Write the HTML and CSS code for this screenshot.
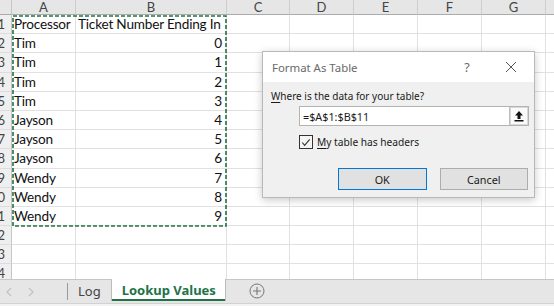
FILE: index.html
```html
<!DOCTYPE html>
<html>
<head>
<meta charset="utf-8">
<link rel="stylesheet" href="styles.css">
</head>
<body>
<div class="app">
  <div class="sheet">
    <div class="grid">
      <div class="corner"></div>
      <div class="ch">A</div><div class="ch">B</div><div class="ch">C</div><div class="ch">D</div><div class="ch">E</div><div class="ch">F</div><div class="ch">G</div><div class="ch"></div>

      <div class="rh">1</div><div class="c">Processor</div><div class="c">Ticket Number Ending In</div><div class="c"></div><div class="c"></div><div class="c"></div><div class="c"></div><div class="c"></div><div class="c"></div>
      <div class="rh">2</div><div class="c">Tim</div><div class="c num">0</div><div class="c"></div><div class="c"></div><div class="c"></div><div class="c"></div><div class="c"></div><div class="c"></div>
      <div class="rh">3</div><div class="c">Tim</div><div class="c num">1</div><div class="c"></div><div class="c"></div><div class="c"></div><div class="c"></div><div class="c"></div><div class="c"></div>
      <div class="rh">4</div><div class="c">Tim</div><div class="c num">2</div><div class="c"></div><div class="c"></div><div class="c"></div><div class="c"></div><div class="c"></div><div class="c"></div>
      <div class="rh">5</div><div class="c">Tim</div><div class="c num">3</div><div class="c"></div><div class="c"></div><div class="c"></div><div class="c"></div><div class="c"></div><div class="c"></div>
      <div class="rh">6</div><div class="c">Jayson</div><div class="c num">4</div><div class="c"></div><div class="c"></div><div class="c"></div><div class="c"></div><div class="c"></div><div class="c"></div>
      <div class="rh">7</div><div class="c">Jayson</div><div class="c num">5</div><div class="c"></div><div class="c"></div><div class="c"></div><div class="c"></div><div class="c"></div><div class="c"></div>
      <div class="rh">8</div><div class="c">Jayson</div><div class="c num">6</div><div class="c"></div><div class="c"></div><div class="c"></div><div class="c"></div><div class="c"></div><div class="c"></div>
      <div class="rh">9</div><div class="c">Wendy</div><div class="c num">7</div><div class="c"></div><div class="c"></div><div class="c"></div><div class="c"></div><div class="c"></div><div class="c"></div>
      <div class="rh">10</div><div class="c">Wendy</div><div class="c num">8</div><div class="c"></div><div class="c"></div><div class="c"></div><div class="c"></div><div class="c"></div><div class="c"></div>
      <div class="rh">11</div><div class="c">Wendy</div><div class="c num">9</div><div class="c"></div><div class="c"></div><div class="c"></div><div class="c"></div><div class="c"></div><div class="c"></div>
      <div class="rh">12</div><div class="c"></div><div class="c"></div><div class="c"></div><div class="c"></div><div class="c"></div><div class="c"></div><div class="c"></div><div class="c"></div>
      <div class="rh">13</div><div class="c"></div><div class="c"></div><div class="c"></div><div class="c"></div><div class="c"></div><div class="c"></div><div class="c"></div><div class="c"></div>
      <div class="rh">14</div><div class="c"></div><div class="c"></div><div class="c"></div><div class="c"></div><div class="c"></div><div class="c"></div><div class="c"></div><div class="c"></div>
    </div>

    <svg class="marquee" width="216" height="212" viewBox="0 0 216 212">
      <rect x="1" y="1" width="213" height="210" fill="none" stroke="#217346" stroke-width="1.6" stroke-dasharray="4 2"/>
    </svg>

    <div class="dialog">
      <div class="dlg-title">
        <span class="dlg-name">Format As Table</span>
        <span class="dlg-help">?</span>
        <svg class="dlg-close" width="12" height="12" viewBox="0 0 12 12"><path d="M1 1 L11 11 M11 1 L1 11" stroke="#555" stroke-width="1" fill="none"/></svg>
      </div>
      <div class="dlg-body">
        <div class="dlg-label"><u>W</u>here is the data for your table?</div>
        <div class="range">
          <span class="range-text">=$A$1:$B$11</span>
          <span class="range-btn">
            <svg width="10" height="12" viewBox="0 0 10 12"><path d="M5 1 L9 5.5 L6.5 5.5 L6.5 9 L3.5 9 L3.5 5.5 L1 5.5 Z" fill="#111"/><rect x="0.5" y="10" width="9" height="1.5" fill="#111"/></svg>
          </span>
        </div>
        <div class="chk">
          <span class="box"><svg width="13" height="13" viewBox="0 0 13 13"><path d="M2.5 6.5 L5 9.5 L10.5 3" stroke="#333" stroke-width="1.2" fill="none"/></svg></span>
          <span class="chk-label"><u>M</u>y table has headers</span>
        </div>
        <div class="btns">
          <div class="btn ok">OK</div>
          <div class="btn">Cancel</div>
        </div>
      </div>
    </div>
  </div>

  <div class="tabbar">
    <div class="nav">
      <svg width="8" height="10" viewBox="0 0 8 10"><path d="M6 1 L2 5 L6 9" stroke="#c3c3c3" stroke-width="1.3" fill="none"/></svg>
      <svg width="8" height="10" viewBox="0 0 8 10"><path d="M2 1 L6 5 L2 9" stroke="#c3c3c3" stroke-width="1.3" fill="none"/></svg>
    </div>
    <div class="sep"></div>
    <div class="tab">Log</div>
    <div class="tab active">Lookup Values</div>
    <div class="add">
      <svg width="16" height="16" viewBox="0 0 16 16"><circle cx="8" cy="8" r="7" stroke="#777" stroke-width="1" fill="none"/><path d="M8 4 V12 M4 8 H12" stroke="#777" stroke-width="1.1"/></svg>
    </div>
  </div>
  <div class="strip"></div>
</div>
</body>
</html>
```

FILE: styles.css
```css
* { box-sizing: border-box; }
html, body { margin: 0; padding: 0; background: #fff; }
body { width: 554px; height: 306px; overflow: hidden; font-family: "Lato", "Liberation Sans", sans-serif; }

.app { width: 554px; height: 306px; display: flex; flex-direction: column; overflow: hidden; }

.sheet { position: relative; height: 279px; overflow: hidden; flex: none; }

.grid {
  display: grid;
  grid-template-columns: 12px 64px 151px 63px 64px 64px 64px 64px 64px;
  grid-template-rows: 15px repeat(14, 19.2px);
  width: 610px;
}

.corner { background: #e6e6e6; border-right: 1px solid #c6c6c6; border-bottom: 1px solid #aaa; }
.ch {
  background: #e6e6e6;
  border-right: 1px solid #cdcdcd;
  border-bottom: 1px solid #ababab;
  color: #444;
  font-size: 13px;
  line-height: 14px;
  text-align: center;
}
.rh {
  background: #efefef;
  border-right: 1px solid #c6c6c6;
  border-bottom: 1px solid #dcdcdc;
  color: #444;
  font-size: 13px;
  line-height: 19px;
  text-align: right;
  padding-right: 6px;
  overflow: hidden;
  white-space: nowrap;
  direction: rtl;
}
.c {
  border-right: 1px solid #e1e1e1;
  border-bottom: 1px solid #e1e1e1;
  font-size: 13.6px;
  letter-spacing: -0.2px;
  line-height: 19px;
  color: #111;
  padding: 0 2px;
  white-space: nowrap;
  overflow: hidden;
}
.c.num { text-align: right; padding-right: 4px; }

.marquee { position: absolute; left: 12px; top: 15px; }

.dialog {
  position: absolute;
  left: 262px;
  top: 51px;
  width: 273px;
  height: 147px;
  background: #f0f0f0;
  border: 1px solid #b9b9b9;
  box-shadow: 0 2px 8px rgba(0,0,0,0.22);
  font-family: "Noto Sans", "Open Sans", sans-serif;
  color: #1a1a1a;
  display: flex;
  flex-direction: column;
}
.dlg-title {
  height: 30px;
  background: #fff;
  display: flex;
  align-items: center;
  padding-left: 9px;
  flex: none;
}
.dlg-name { font-size: 11.4px; color: #6a6a6a; flex: 1; }
.dlg-help { font-size: 12.5px; color: #6a6a6a; width: 12px; text-align: center; margin-right: 32px; }
.dlg-close { margin-right: 17px; }

.dlg-body { padding: 6px 6px 0 8px; display: flex; flex-direction: column; }
.dlg-label { font-size: 10px; line-height: 16px; height: 18px; }
.dlg-label u, .chk-label u { text-decoration-thickness: 1px; text-underline-offset: 2px; }

.range {
  margin-left: 28px;
  width: 230px;
  height: 20px;
  background: #fff;
  border: 1px solid #b3b3b3;
  display: flex;
  align-items: center;
  font-size: 10.8px;
}
.range-text { flex: 1; padding-left: 3px; }
.range-btn {
  width: 19px;
  height: 18px;
  border-left: 1px solid #bcbcbc;
  background: #fafafa;
  display: flex;
  align-items: center;
  justify-content: center;
  box-shadow: inset 0 0 0 1px #d8d8d8;
}

.chk { margin-left: 28px; margin-top: 9px; display: flex; align-items: center; height: 14px; }
.box {
  width: 14px; height: 14px;
  border: 1px solid #333;
  background: #f4f4f4;
  display: flex; align-items: center; justify-content: center;
}
.chk-label { font-size: 10.2px; margin-left: 4px; }

.btns { display: flex; margin-top: 19px; margin-left: 67px; gap: 13px; }
.btn {
  width: 89px;
  height: 22px;
  background: #e1e1e1;
  border: 1px solid #adadad;
  font-size: 10.8px;
  display: flex;
  align-items: center;
  justify-content: center;
}
.btn.ok { border: 1.5px solid #0078d7; }

.tabbar {
  height: 24px;
  background: #e6e6e6;
  border-top: 1px solid #c6c6c6;
  display: flex;
  align-items: stretch;
  flex: none;
}
.nav { width: 62px; display: flex; align-items: center; gap: 14px; padding-left: 5px; }
.sep { width: 1px; background: #9a9a9a; margin: 3px 0 3px 5px; }
.tab {
  font-family: "Noto Sans", "Open Sans", sans-serif;
  font-size: 13px;
  color: #444;
  display: flex;
  align-items: center;
  padding: 0 10px 2px 10px;
}
.tab.active {
  background: #fff;
  color: #217346;
  font-weight: bold;
  margin-top: -1px;
  border-left: 1px solid #bcbcbc;
  border-right: 1px solid #bcbcbc;
  padding: 0 9px 0 10px;
  box-shadow: inset 0 -2px 0 #217346;
  height: 22px;
}
.add { display: flex; align-items: center; padding-left: 23px; padding-bottom: 1px; }

.strip { flex: 1; background: #f3f3f3; border-top: 1px solid #d2d2d2; }
```
